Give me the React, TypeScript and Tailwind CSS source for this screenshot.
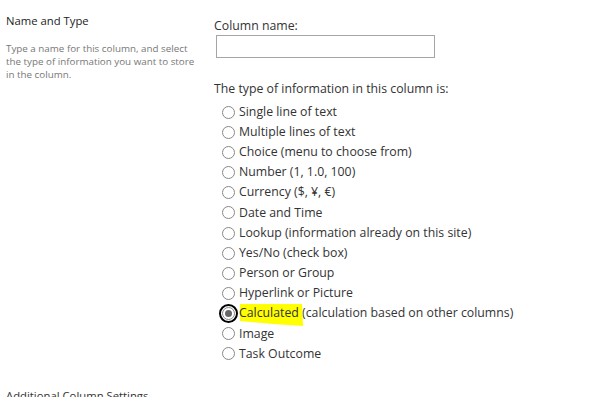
import React from "react";

const options = [
  "Single line of text",
  "Multiple lines of text",
  "Choice (menu to choose from)",
  "Number (1, 1.0, 100)",
  "Currency ($, ¥, €)",
  "Date and Time",
  "Lookup (information already on this site)",
  "Yes/No (check box)",
  "Person or Group",
  "Hyperlink or Picture",
  "Calculated",
  "Image",
  "Task Outcome",
];

function Radio({ checked }: { checked?: boolean }) {
  if (checked) {
    return (
      <span className="relative flex h-[13px] w-[13px] shrink-0 items-center justify-center rounded-full border border-[#888] bg-white outline outline-2 outline-offset-[1px] outline-black">
        <span className="h-[7px] w-[7px] rounded-full bg-[#666]" />
      </span>
    );
  }
  return <span className="h-[13px] w-[13px] shrink-0 rounded-full border border-[#888] bg-white" />;
}

export default function App() {
  return (
    <div
      className="relative h-[397px] w-[599px] overflow-hidden bg-white text-[#333]"
      style={{ fontFamily: '"Open Sans", "Noto Sans", sans-serif' }}
    >
      <div className="flex">
        <div className="w-[214px] shrink-0 pl-[6px] pr-[14px] pt-[12px]">
          <div className="text-[11.3px] leading-[18px] text-[#222]">Name and Type</div>
          <div className="mt-[11.5px] text-[9.8px] leading-[13px] text-[#777]">
            Type a name for this column, and select
            <br />
            the type of information you want to store
            <br />
            in the column.
          </div>
        </div>
        <div className="pt-[17px]">
          <div className="text-[12.3px] leading-[18px]">Column name:</div>
          <div className="ml-[2px] h-[23px] w-[219px] border border-[#a6a6a6] bg-white" />
          <div className="mt-[22px] text-[12.3px] leading-[18px]">The type of information in this column is:</div>
          <div className="ml-[8px] mt-[4px] flex flex-col">
            {options.map((o, i) => (
              <div key={o} className="flex h-[20.17px] items-center gap-[4px] text-[12.3px]">
                <Radio checked={i === 10} />
                {i === 10 ? (
                  <span className="whitespace-nowrap">
                    <span className="relative inline-block">
                      <svg
                        className="absolute left-[0px] top-[-1px]"
                        width="66"
                        height="24"
                        viewBox="0 0 66 24"
                      >
                        <polygon points="1,1 63,1 64,23 34,21 1,18" fill="#ffff00" />
                      </svg>
                      <span className="relative">Calculated</span>
                    </span>{" "}
                    (calculation based on other columns)
                  </span>
                ) : (
                  <span className="whitespace-nowrap">{o}</span>
                )}
              </div>
            ))}
          </div>
        </div>
      </div>
      <div className="pl-[6px] pt-[23px] text-[11.3px] leading-[18px]">Additional Column Settings</div>
    </div>
  );
}
